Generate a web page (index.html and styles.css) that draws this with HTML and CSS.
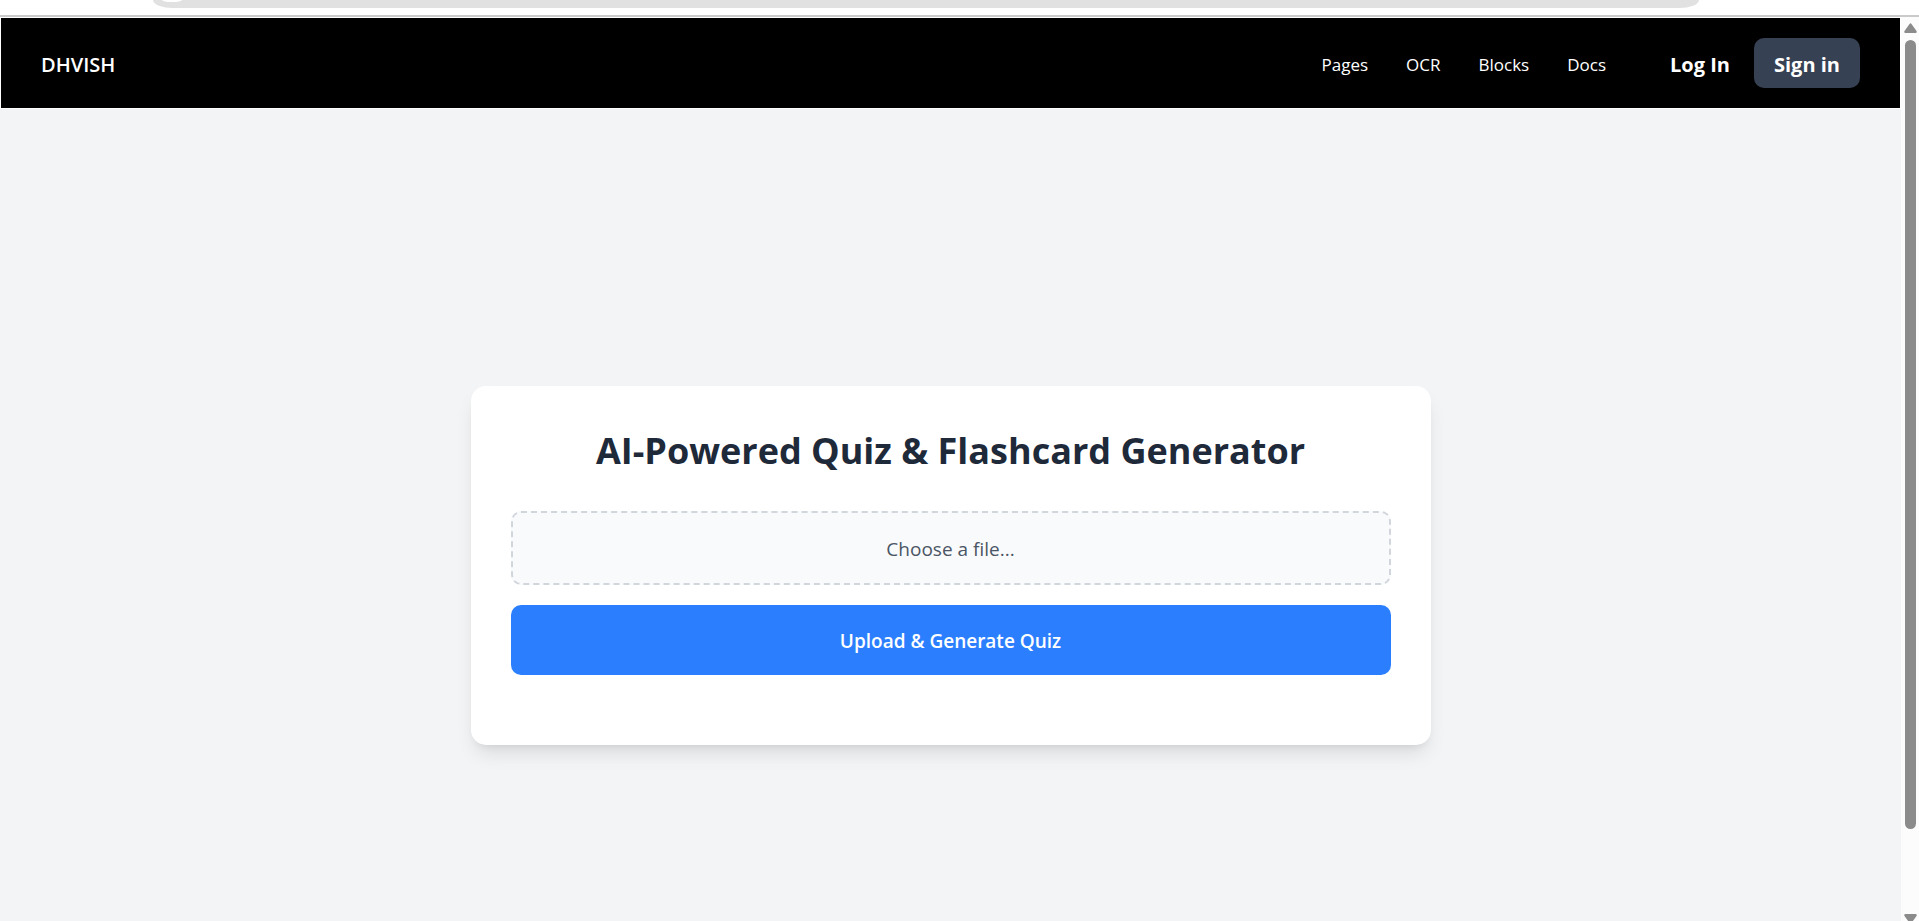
FILE: index.html
```html
<!DOCTYPE html>
<html lang="en">
<head>
<meta charset="utf-8">
<title>AI-Powered Quiz &amp; Flashcard Generator</title>
<link rel="stylesheet" href="styles.css">
</head>
<body>
<div class="toolbar"><div class="address"><span class="site-dot"></span></div></div>
<div class="window">
  <div class="page">
    <header class="navbar">
      <a class="brand" href="#">DHVISH</a>
      <nav class="links">
        <a href="#">Pages</a>
        <a href="#">OCR</a>
        <a href="#">Blocks</a>
        <a href="#">Docs</a>
      </nav>
      <div class="account">
        <button class="login" type="button">Log In</button>
        <button class="signin" type="button">Sign in</button>
      </div>
    </header>
    <main class="content">
      <form class="card">
        <h1>AI-Powered Quiz &amp; Flashcard Generator</h1>
        <input class="file-input" type="file" id="file">
        <label class="dropzone" for="file">Choose a file...</label>
        <button class="upload" type="button">Upload &amp; Generate Quiz</button>
      </form>
    </main>
  </div>
  <div class="scrollbar" aria-hidden="true">
    <svg class="arrow" viewBox="0 0 13 10"><path d="M5.5 1Q6.5-.6 7.5 1L12.5 8Q13.300 10 11.500 10H1.500Q-.3 10 .5 8Z"/></svg>
    <div class="track"><div class="thumb"></div></div>
    <svg class="arrow" viewBox="0 0 13 10"><path d="M5.500 9Q6.500 10.600 7.500 9L12.500 2Q13.300 0 11.500 0H1.500Q-.3 0 .5 2Z"/></svg>
  </div>
</div>
</body>
</html>
```

FILE: styles.css
```css
* { box-sizing: border-box; }

body {
  margin: 0;
  height: 100vh;
  display: flex;
  flex-direction: column;
  overflow: hidden;
  background: #fff;
  font-family: "Segoe UI", "Open Sans", "Noto Sans", sans-serif;
  font-size: 19px;
}

a { color: inherit; text-decoration: none; }
button { border: 0; font: inherit; color: #fff; cursor: pointer; }

.toolbar {
  flex: none;
  height: 17px;
  padding: 0 220px 0 153px;
  border-bottom: 2px solid #c9cbc9;
}

.address {
  height: 8px;
  padding-left: 9px;
  overflow: hidden;
  background: #e1e1e1;
  border-radius: 0 0 20px 20px / 0 0 8px 8px;
}

.site-dot {
  display: block;
  width: 20px;
  height: 2px;
  background: #fff;
  border-radius: 0 0 10px 10px / 0 0 2px 2px;
}

.window { flex: 1; min-height: 0; display: flex; }
.page { flex: 1; overflow: hidden; background: #f3f4f6; }

.navbar {
  display: flex;
  align-items: center;
  height: 92px;
  padding: 0 40px;
  border: 1px solid #fff;
  background: #000;
  color: #fff;
}

.brand { padding-top: 2px; font-size: 20px; font-weight: 600; }
.links { display: flex; gap: 38px; margin-left: auto; padding-top: 2px; font-size: 17px; }
.account { display: flex; margin-left: 40px; font-size: 20px; font-weight: 700; }
.login { padding: 2px 24px 0; background: none; }
.signin { height: 50px; padding: 2px 20px 0; border-radius: 10px; background: #364153; }

.content {
  display: flex;
  align-items: center;
  justify-content: center;
  min-height: calc(100vh - 8px);
}

.card {
  display: flex;
  flex-direction: column;
  width: 100%;
  max-width: 960px;
  padding: 40px 40px 70px;
  border-radius: 15px;
  background: #fff;
  box-shadow: 0 12px 19px -4px rgba(0, 0, 0, .1), 0 5px 8px -5px rgba(0, 0, 0, .1);
}

h1 {
  margin: 0 0 36px;
  font-size: 36px;
  line-height: 49px;
  font-weight: 700;
  text-align: center;
  color: #1e2939;
}

.file-input { position: absolute; width: 1px; height: 1px; opacity: 0; }

.dropzone {
  padding: 21px 20px 19px;
  border: 2px dashed #d1d5dc;
  border-radius: 10px;
  background: #f9fafb;
  color: #4a5565;
  line-height: 30px;
  text-align: center;
  cursor: pointer;
}

.upload {
  margin-top: 20px;
  padding: 21px 20px 19px;
  border-radius: 10px;
  background: #2b7fff;
  font-weight: 600;
  line-height: 30px;
}

.scrollbar {
  flex: none;
  display: flex;
  flex-direction: column;
  align-items: center;
  width: 18px;
  padding-top: 6px;
  background: #fcfcfc;
}

.arrow { flex: none; width: 13px; height: 10px; fill: #8b8b8b; }
.track { flex: 1; width: 11px; padding-top: 7px; margin-bottom: -3px; }
.thumb { height: 90%; border-radius: 6px; background: #8b8b8b; }
.track + .arrow { margin-bottom: -3px; }
```
